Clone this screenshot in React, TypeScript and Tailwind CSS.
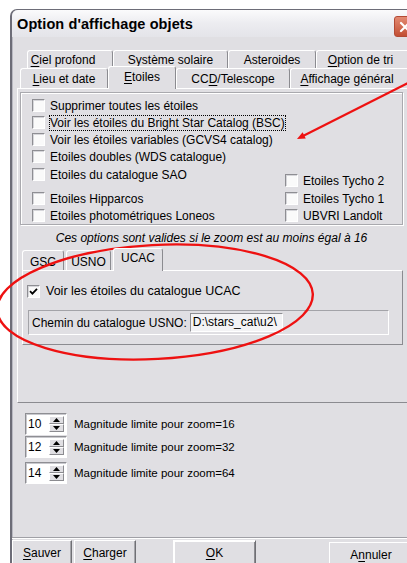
import React from 'react'

// underline the mnemonic letter of a label, Windows style
const Mn = ({ text, at }: { text: string; at: number }) => (
  <>
    {text.slice(0, at)}
    <span className="underline underline-offset-[2px]">{text[at]}</span>
    {text.slice(at + 1)}
  </>
)

const Box = ({ checked }: { checked?: boolean }) => (
  <span className="w-[13px] h-[13px] shrink-0 border border-t-[#8e8e93] border-l-[#8e8e93] border-b-white border-r-white bg-[#fafafa] shadow-[inset_1px_1px_0_#d6d6da] flex items-center justify-center">
    {checked && (
      <svg width="9" height="9" viewBox="0 0 9 9">
        <path d="M1 4.2 L3.4 6.6 L8 1.8" stroke="#000" strokeWidth="1.8" fill="none" />
      </svg>
    )}
  </span>
)

const Check = ({ label, checked, focus, className = '' }: { label: string; checked?: boolean; focus?: boolean; className?: string }) => (
  <div className={`flex items-center gap-[5px] h-[17px] ${className}`}>
    <Box checked={checked} />
    <span className={`leading-[14px] ${focus ? 'outline outline-1 outline-dotted outline-black' : ''}`}>{label}</span>
  </div>
)

// tab head, raised edges, open at the bottom
const Tab = ({ children, className = '', active }: { children: React.ReactNode; className?: string; active?: boolean }) => (
  <div
    className={`flex items-center justify-center shrink-0 rounded-t-[3px] border-t border-l border-r border-t-white border-l-white border-r-[#8b8b90] bg-[#e0dfe3] ${
      active ? 'relative z-10 -mb-px pb-[2px]' : 'pt-[1px]'
    } ${className}`}
  >
    {children}
  </div>
)

const Spin = ({ value, label, className = '' }: { value: string; label: string; className?: string }) => (
  <div className={`flex items-center ${className}`}>
    <div className="w-[42px] h-[22px] flex border border-t-[#8e8e93] border-l-[#8e8e93] border-b-white border-r-white bg-white shadow-[inset_1px_1px_0_#c9c9ce]">
      <span className="flex-1 pl-[2px] pt-[2px] leading-[16px]">{value}</span>
      <div className="w-[15px] flex flex-col my-[2px] mr-[2px]">
        <div className="flex-1 flex items-center justify-center bg-[#e0dfe3] border border-t-white border-l-white border-b-[#8b8b90] border-r-[#8b8b90]">
          <svg width="7" height="4" viewBox="0 0 7 4"><path d="M0 4 L3.5 0 L7 4 Z" fill="#000" /></svg>
        </div>
        <div className="flex-1 flex items-center justify-center bg-[#e0dfe3] border border-t-white border-l-white border-b-[#8b8b90] border-r-[#8b8b90]">
          <svg width="7" height="4" viewBox="0 0 7 4"><path d="M0 0 L7 0 L3.5 4 Z" fill="#000" /></svg>
        </div>
      </div>
    </div>
    <span className="ml-[7px] text-[11.5px] pt-[2px]">{label}</span>
  </div>
)

const Btn = ({ children, className = '' }: { children: React.ReactNode; className?: string }) => (
  <div className={`h-[26px] shrink-0 flex items-center justify-center bg-[#e0dfe3] border border-t-white border-l-white border-b-[#6f6f74] border-r-[#6f6f74] shadow-[inset_-1px_-1px_0_#a5a5aa] ${className}`}>
    {children}
  </div>
)

export default function App() {
  return (
    <div className="relative w-[407px] h-[563px] overflow-hidden bg-white font-['Liberation_Sans',Arial,sans-serif] text-[12px] text-black">
      <div className="ml-[10px] mt-[9px] w-[412px] h-[560px] rounded-tl-[7px] border-l-2 border-t border-[#6d6d78] bg-[#e0dfe3] shadow-[inset_1px_1px_0_#b9b9c2]">
        {/* title bar */}
        <div className="h-[27px] flex items-center pl-[5px] rounded-tl-[6px] bg-gradient-to-b from-[#fbfbfc] via-[#ececf0] to-[#e4e4e9]">
          <span className="font-bold text-[14.5px] tracking-[0.1px] pt-[2px]">Option d&apos;affichage objets</span>
          <div className="ml-auto mr-[6px] mt-[6px] w-[22px] h-[21px] rounded-[3px] border border-[#b34a35] bg-gradient-to-b from-[#e38a72] to-[#c24e33] flex items-center justify-center">
            <svg width="12" height="12" viewBox="0 0 12 12">
              <path d="M2 2 L10 10 M10 2 L2 10" stroke="#fff" strokeWidth="2.2" strokeLinecap="round" />
            </svg>
          </div>
        </div>

        <div className="px-[5px] pt-[13px]">
          {/* tab rows */}
          <div className="flex ml-[10px] h-[18px]">
            <Tab className="w-[86px] pr-[14px]"><Mn text="Ciel profond" at={0} /></Tab>
            <Tab className="w-[115px]"><Mn text="Système solaire" at={0} /></Tab>
            <Tab className="w-[88px]">Asteroides</Tab>
            <Tab className="w-[95px] pr-[6px]"><Mn text="Option de tri" at={0} /></Tab>
          </div>
          <div className="flex items-end ml-[3px] h-[20px]">
            <Tab className="w-[88px] h-[20px]"><Mn text="Lieu et date" at={0} /></Tab>
            <Tab active className="w-[68px] h-[23px]"><Mn text="Etoiles" at={0} /></Tab>
            <Tab className="w-[114px] h-[20px]"><Mn text="CCD/Telescope" at={2} /></Tab>
            <Tab className="w-[120px] h-[20px] pr-[6px]"><Mn text="Affichage général" at={0} /></Tab>
          </div>

          {/* Etoiles sheet */}
          <div className="h-[315px] border border-t-white border-l-white border-b-[#8b8b90] border-r-[#8b8b90] pl-[2px] pt-[3px]">
            <div className="w-[383px] h-[133px] border border-[#a9a9ae] shadow-[inset_1px_1px_0_#fff,1px_1px_0_#fff] pl-[11px] pt-[4px]">
              <Check label="Supprimer toutes les étoiles" />
              <Check label="Voir les étoiles du Bright Star Catalog (BSC)" focus />
              <Check label="Voir les étoiles variables (GCVS4 catalog)" />
              <Check label="Etoiles doubles (WDS catalogue)" />
              <div className="grid grid-cols-[253px_1fr] mt-[1px]">
                <div>
                  <Check label="Etoiles du catalogue SAO" className="mb-[7px]" />
                  <Check label="Etoiles Hipparcos" />
                  <Check label="Etoiles photométriques Loneos" />
                </div>
                <div className="pt-[6px]">
                  <Check label="Etoiles Tycho 2" className="mb-[1px]" />
                  <Check label="Etoiles Tycho 1" />
                  <Check label="UBVRI Landolt" />
                </div>
              </div>
            </div>

            <div className="w-[383px] h-[23px] pt-[2px] flex items-center justify-center italic">
              Ces options sont valides si le zoom est au moins égal à 16
            </div>

            {/* catalogue tabs */}
            <div className="flex items-end ml-[2px] h-[22px] gap-[2px]">
              <Tab className="w-[42px] h-[20px] pt-[3px]">GSC</Tab>
              <Tab className="w-[45px] h-[20px] pt-[3px]">USNO</Tab>
              <Tab active className="w-[50px] h-[23px] pb-[4px]">UCAC</Tab>
            </div>
            <div className="ml-[2px] w-[381px] h-[75px] border border-t-white border-l-white border-b-[#8b8b90] border-r-[#8b8b90] px-[4px] pt-[13px]">
              <div className="flex items-center gap-[6px] h-[14px] text-[12.5px]">
                <Box checked />
                <span>Voir les étoiles du catalogue UCAC</span>
              </div>
              <div className="ml-[1px] mt-[12px] w-[361px] h-[25px] border border-t-[#a3a3a8] border-l-[#a3a3a8] border-b-white border-r-white flex items-center pl-[3px]">
                <span>Chemin du catalogue USNO:</span>
                <div className="ml-[3px] w-[93px] h-[19px] border border-t-[#8e8e93] border-l-[#8e8e93] border-b-white border-r-white bg-[#f3f3f5] pl-[2px] leading-[17px]">
                  {'D:\\stars_cat\\u2\\'}
                </div>
              </div>
            </div>
          </div>

          {/* magnitude limits */}
          <div className="ml-[8px] mt-[10px]">
            <Spin value="10" label="Magnitude limite pour zoom=16" />
            <Spin value="12" label="Magnitude limite pour zoom=32" className="mt-[1px]" />
            <Spin value="14" label="Magnitude limite pour zoom=64" className="mt-[4px]" />
          </div>
        </div>

        {/* bottom buttons */}
        <div className="mt-[53px] border-t border-[#a0a0a6] shadow-[inset_0_1px_0_#fff] pt-[2px] flex">
          <Btn className="w-[60px]"><Mn text="Sauver" at={0} /></Btn>
          <Btn className="w-[62px] ml-[2px]"><Mn text="Charger" at={0} /></Btn>
          <Btn className="w-[83px] ml-[37px] border-[#222] border-t-[#222] border-l-[#222] shadow-[inset_1px_1px_0_#fff,inset_-1px_-1px_0_#8b8b90]"><Mn text="OK" at={0} /></Btn>
          <Btn className="w-[84px] ml-[73px] mt-[2px]"><Mn text="Annuler" at={1} /></Btn>
        </div>
      </div>

      {/* red annotation drawn over the dialog */}
      <svg className="absolute inset-0 pointer-events-none" width="407" height="563" viewBox="0 0 407 563">
        <ellipse cx="155" cy="302" rx="158" ry="57" transform="rotate(-3 155 302)" fill="none" stroke="#ee1111" strokeWidth="2.4" />
        <line x1="412" y1="81" x2="302" y2="136.5" stroke="#ee1111" strokeWidth="2.2" />
        <path d="M297 139 L305.8 138.4 L302.6 132.2 Z" fill="#ee1111" />
      </svg>
    </div>
  )
}
